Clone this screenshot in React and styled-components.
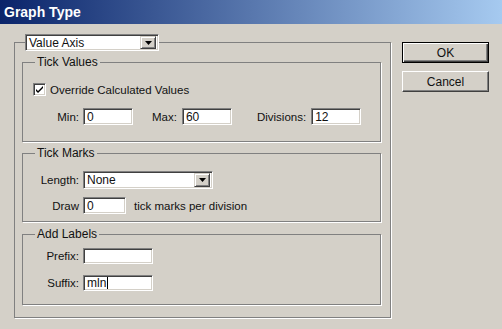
import React from 'react';
import styled, { createGlobalStyle } from 'styled-components';

const GlobalStyle = createGlobalStyle`
  html, body {
    margin: 0;
    padding: 0;
    background: #d4d0c8;
  }
  body {
    font-family: "Liberation Sans", Arial, sans-serif;
    font-size: 11.5px;
    color: #111;
  }
`;

const Window = styled.div`
  width: 502px;
  height: 329px;
  background: #d4d0c8;
  display: flex;
  flex-direction: column;
  overflow: hidden;
`;

const TitleBar = styled.div`
  height: 24px;
  flex: none;
  display: flex;
  align-items: center;
  padding-left: 4px;
  background: linear-gradient(to right, #0a246a, #a6caf0);
  color: #fff;
  font-weight: bold;
  font-size: 14px;
`;

const Body = styled.div`
  display: flex;
  align-items: flex-start;
  padding: 10px 0 0 14px;
`;

const Group = styled.fieldset`
  margin: ${p => p.$margin || '0'};
  min-width: 0;
  width: ${p => p.$width || 'auto'};
  box-sizing: border-box;
  border: 1px solid #808080;
  box-shadow: 1px 1px 0 #fff;
  padding: ${p => p.$pad};
`;

const Legend = styled.legend`
  padding: 0 2px;
  margin-left: 2px;
  line-height: 14px;
  font-size: 12px;
`;

const SelectLegend = styled.legend`
  padding: 0;
  margin-left: 3px;
  margin-bottom: -6px;
`;

const Row = styled.div`
  display: flex;
  align-items: center;
  height: ${p => p.$h || 17}px;
  margin-top: ${p => p.$mt || 0}px;
`;

const Label = styled.span`
  width: 46px;
  margin-right: 4px;
  text-align: right;
  white-space: nowrap;
`;

const SideLabel = styled.span`
  margin-left: ${p => p.$ml}px;
  margin-right: 5px;
  white-space: nowrap;
`;

const Input = styled.div`
  box-sizing: border-box;
  width: ${p => p.$w}px;
  height: ${p => p.$h || 17}px;
  background: #fff;
  border: 1px solid;
  border-color: #808080 #fff #fff #808080;
  box-shadow: inset 1px 1px 0 #404040, inset -1px -1px 0 #d4d0c8;
  padding-left: 3px;
  display: flex;
  align-items: center;
  line-height: 1;
  font-size: 12px;
`;

const Caret = styled.span`
  display: inline-block;
  width: 1px;
  height: 12px;
  background: #000;
  margin-left: 1px;
`;

const Select = styled(Input)`
  padding-right: 2px;
  justify-content: space-between;
`;

const ArrowButton = styled.div`
  box-sizing: border-box;
  width: 16px;
  height: ${p => p.$h}px;
  background: #d4d0c8;
  border: 1px solid;
  border-color: #d4d0c8 #404040 #404040 #d4d0c8;
  box-shadow: inset 1px 1px 0 #fff, inset -1px -1px 0 #808080;
  display: flex;
  align-items: center;
  justify-content: center;
`;

const Check = styled.div`
  box-sizing: border-box;
  width: 13px;
  height: 13px;
  background: #fff;
  border: 1px solid;
  border-color: #808080 #fff #fff #808080;
  box-shadow: inset 1px 1px 0 #404040, inset -1px -1px 0 #d4d0c8;
  display: flex;
  align-items: center;
  justify-content: center;
  margin-right: 4px;
`;

const Buttons = styled.div`
  display: flex;
  flex-direction: column;
  gap: 8px;
  margin: 8px 0 0 11px;
`;

const Button = styled.div`
  box-sizing: border-box;
  width: 87px;
  height: 21px;
  display: flex;
  align-items: center;
  justify-content: center;
  font-size: 12px;
  background: #d4d0c8;
  border: 1px solid;
  border-color: ${p => (p.$default ? '#000' : '#fff #404040 #404040 #fff')};
  box-shadow: ${p =>
    p.$default
      ? 'inset 1px 1px 0 #fff, inset -1px -1px 0 #404040, inset -2px -2px 0 #808080'
      : 'inset -1px -1px 0 #808080'};
`;

const Arrow = () => (
  <svg width="7" height="4" viewBox="0 0 7 4">
    <path d="M0 0h7L3.5 4z" fill="#000" />
  </svg>
);

const Dropdown = ({ width, height, value }) => (
  <Select $w={width} $h={height}>
    <span>{value}</span>
    <ArrowButton $h={height - 4}>
      <Arrow />
    </ArrowButton>
  </Select>
);

const App = () => (
  <>
    <GlobalStyle />
    <Window>
      <TitleBar>Graph Type</TitleBar>
      <Body>
        <Group $width="377px" $pad="0 9px 12px 7px">
          <SelectLegend>
            <Dropdown width={134} height={17} value="Value Axis" />
          </SelectLegend>
          <Group $pad="12px 10px 16px 10px" $margin="10px 0 0 0">
            <Legend>Tick Values</Legend>
            <Row>
              <Check>
                <svg width="9" height="9" viewBox="0 0 9 9">
                  <path d="M1 4l2 2 5-5v2L3 8 1 6z" fill="#000" />
                </svg>
              </Check>
              Override Calculated Values
            </Row>
            <Row $mt={10}>
              <Label>Min:</Label>
              <Input $w={50}>0</Input>
              <SideLabel $ml={19}>Max:</SideLabel>
              <Input $w={50}>60</Input>
              <SideLabel $ml={25}>Divisions:</SideLabel>
              <Input $w={50}>12</Input>
            </Row>
          </Group>
          <Group $pad="11px 10px 7px 10px" $margin="4px 0 0 0">
            <Legend>Tick Marks</Legend>
            <Row $h={18}>
              <Label>Length:</Label>
              <Dropdown width={130} height={18} value="None" />
            </Row>
            <Row $mt={8}>
              <Label>Draw</Label>
              <Input $w={43}>0</Input>
              <SideLabel $ml={8}>tick marks per division</SideLabel>
            </Row>
          </Group>
          <Group $pad="7px 10px 13px 10px" $margin="5px 0 0 0">
            <Legend>Add Labels</Legend>
            <Row $h={16}>
              <Label>Prefix:</Label>
              <Input $w={70} $h={16} />
            </Row>
            <Row $h={16} $mt={11}>
              <Label>Suffix:</Label>
              <Input $w={70} $h={16}>
                mln
                <Caret />
              </Input>
            </Row>
          </Group>
        </Group>
        <Buttons>
          <Button $default>OK</Button>
          <Button>Cancel</Button>
        </Buttons>
      </Body>
    </Window>
  </>
);

export default App;
